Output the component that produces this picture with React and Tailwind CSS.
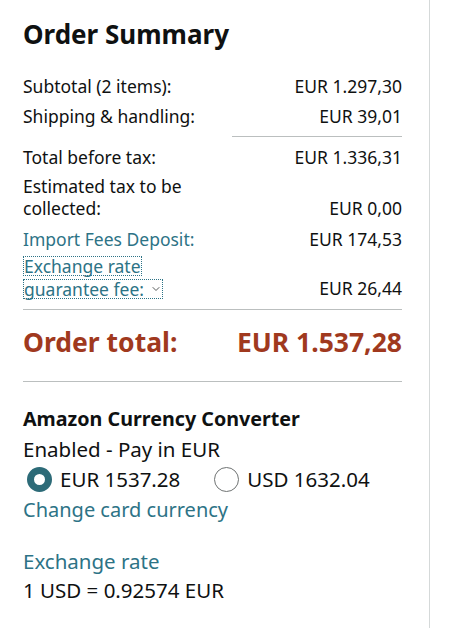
import { ChevronDown } from "lucide-react";

function Row({ label, value, labelClass = "" }) {
  return (
    <div className="flex items-end justify-between">
      <div className={labelClass}>{label}</div>
      <div className="text-right">{value}</div>
    </div>
  );
}

export default function App() {
  return (
    <div
      className="flex h-[628px] w-[449px] bg-white text-[#0f1111]"
      style={{ fontFamily: '"Noto Sans", Arial, sans-serif' }}
    >
      <div className="w-[430px] border-r border-[#d5d9d9] pl-[23px] pr-[27px] pt-[16px]">
        <h1 className="text-[26px] font-bold leading-[36px]">Order Summary</h1>

        {/* rows */}
        <div className="mt-[23px] flex flex-col text-[17.5px] leading-[22px]">
          <Row label="Subtotal (2 items):" value="EUR 1.297,30" />
          <div className="mt-[8px]">
            <Row label="Shipping & handling:" value="EUR 39,01" />
          </div>
          <div className="ml-auto mt-[9px] h-px w-[170px] bg-[#bbbfbf]" />
          <div className="mt-[9px]">
            <Row label="Total before tax:" value="EUR 1.336,31" />
          </div>
          <div className="mt-[7px]">
            <Row label={<>Estimated tax to be<br />collected:</>} value="EUR 0,00" />
          </div>
          <div className="mt-[9px]">
            <Row label="Import Fees Deposit:" value="EUR 174,53" labelClass="text-[#2d7386]" />
          </div>
          <div className="mt-[6px]">
            <Row
              labelClass="flex flex-col items-start gap-[3px] text-[#2d7386] leading-[18px]"
              label={
                <>
                  <span className="border border-dotted border-[#2d7386]">Exchange rate</span>
                  <span className="flex items-center border border-dotted border-[#2d7386]">
                    guarantee fee:
                    <ChevronDown className="ml-[6px] h-[12px] w-[12px] text-[#565959]" strokeWidth={2} />
                  </span>
                </>
              }
              value="EUR 26,44"
            />
          </div>
          <div className="mt-[10px] h-px w-full bg-[#bbbfbf]" />
        </div>

        <div className="mt-[16px] flex items-center justify-between text-[26.5px] font-bold leading-[32px] text-[#a0391e]">
          <span>Order total:</span>
          <span>EUR 1.537,28</span>
        </div>

        <div className="mt-[23px] h-px w-full bg-[#bbbfbf]" />

        <div className="mt-[23px] text-[20.5px] leading-[28px]">
          <div className="font-bold text-[19.7px]">Amazon Currency Converter</div>
          <div className="mt-[2px]">Enabled - Pay in EUR</div>
          <div className="mt-[2px] flex items-center">
            <span className="ml-[4px] box-border h-[25px] w-[25px] rounded-full border-[7px] border-[#2d6b78] bg-white" />
            <span className="ml-[8px]">EUR 1537.28</span>
            <span className="ml-[34px] box-border h-[25px] w-[25px] rounded-full border border-[#6f7373] bg-white" />
            <span className="ml-[8px]">USD 1632.04</span>
          </div>
          <div className="mt-[3px] text-[20px] text-[#2d7386]">Change card currency</div>
          <div className="mt-[23px] text-[#2d7386]">Exchange rate</div>
          <div className="mt-[1px]">1 USD = 0.92574 EUR</div>
        </div>
      </div>
    </div>
  );
}
